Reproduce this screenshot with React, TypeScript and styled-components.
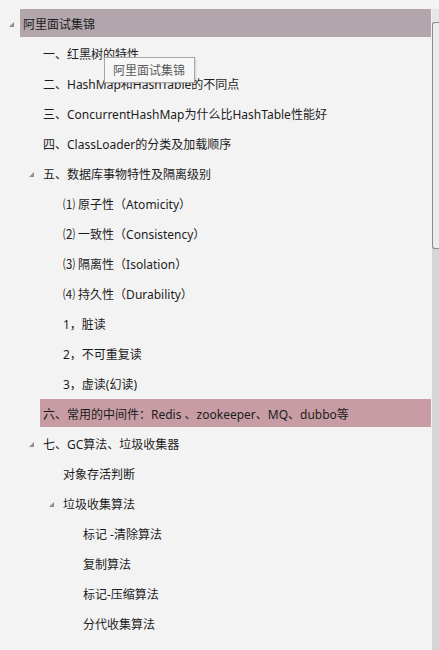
import React from "react";
import styled, { createGlobalStyle } from "styled-components";

const Global = createGlobalStyle`
  html, body { margin: 0; padding: 0; background: #f3f3f3; overflow: hidden; }
  #root { width: 439px; height: 650px; }
`;

const Panel = styled.div`
  position: relative;
  display: flex;
  width: 439px;
  height: 650px;
  background: #f3f3f3;
  font-family: "Noto Sans", "Noto Sans CJK SC", sans-serif;
  font-size: 12px;
  color: #1c1c1c;
  overflow: hidden;
`;

const Tree = styled.div`
  flex: 1;
  display: flex;
  flex-direction: column;
  gap: 2px;
  padding-top: 9px;
  padding-right: 1px;
`;

const Row = styled.div`
  display: flex;
  height: 28px;
  flex: none;
`;

const Gutter = styled.div<{ $level: number }>`
  width: ${(p) => 20 + p.$level * 20}px;
  flex: none;
  display: flex;
  justify-content: flex-end;
  align-items: center;
  padding-right: 6px;
  padding-top: 2px;
  box-sizing: border-box;
`;

const Label = styled.div<{ $bg?: string }>`
  flex: 1;
  display: flex;
  align-items: center;
  padding-left: 3px;
  padding-top: 3px;
  box-sizing: border-box;
  background: ${(p) => p.$bg ?? "transparent"};
  white-space: nowrap;
  line-height: 1;
`;

const Scrollbar = styled.div`
  width: 7px;
  flex: none;
  margin-top: 9px;
  background: #d5d5d5;
  display: flex;
  flex-direction: column;
  position: relative;
`;

const ScrollArrow = styled.div`
  height: 13px;
  background: #e6e6e6;
`;

const Thumb = styled.div`
  height: 227px;
  background: #ececec;
  border-left: 1px solid #8c8c8c;
  border-top: 1px solid #8c8c8c;
  border-bottom: 1px solid #8c8c8c;
  border-radius: 3px 0 0 3px;
  box-sizing: border-box;
`;

const Track = styled.div`
  flex: 1;
`;

const Tooltip = styled.div`
  position: absolute;
  left: 104px;
  top: 57px;
  width: 91px;
  height: 26px;
  box-sizing: border-box;
  border: 1px solid #a6a6a6;
  background: #f7f7f7;
  color: #5a5a5a;
  font-size: 12px;
  display: flex;
  align-items: center;
  padding-left: 8px;
  padding-top: 2px;
  box-shadow: 1px 1px 2px rgba(0, 0, 0, 0.12);
  white-space: nowrap;
  line-height: 1;
`;

const Expander = () => (
  <svg width="5" height="5" viewBox="0 0 5 5">
    <polygon points="5,0 5,5 0,5" fill="#8f8f8f" />
  </svg>
);

type Item = { text: string; level: number; open?: boolean; bg?: string };

const items: Item[] = [
  { text: "阿里面试集锦", level: 0, open: true, bg: "#b2a6ac" },
  { text: "一、红黑树的特性", level: 1 },
  { text: "二、HashMap和HashTable的不同点", level: 1 },
  { text: "三、ConcurrentHashMap为什么比HashTable性能好", level: 1 },
  { text: "四、ClassLoader的分类及加载顺序", level: 1 },
  { text: "五、数据库事物特性及隔离级别", level: 1, open: true },
  { text: "⑴ 原子性（Atomicity）", level: 2 },
  { text: "⑵ 一致性（Consistency）", level: 2 },
  { text: "⑶ 隔离性（Isolation）", level: 2 },
  { text: "⑷ 持久性（Durability）", level: 2 },
  { text: "1，脏读", level: 2 },
  { text: "2，不可重复读", level: 2 },
  { text: "3，虚读(幻读)", level: 2 },
  { text: "六、常用的中间件：Redis 、zookeeper、MQ、dubbo等", level: 1, bg: "#c79ca4" },
  { text: "七、GC算法、垃圾收集器", level: 1, open: true },
  { text: "对象存活判断", level: 2 },
  { text: "垃圾收集算法", level: 2, open: true },
  { text: "标记 -清除算法", level: 3 },
  { text: "复制算法", level: 3 },
  { text: "标记-压缩算法", level: 3 },
  { text: "分代收集算法", level: 3 },
];

export default function App() {
  return (
    <>
      <Global />
      <Panel>
        <Tree>
          {items.map((it, i) => (
            <Row key={i}>
              <Gutter $level={it.level}>{it.open ? <Expander /> : null}</Gutter>
              <Label $bg={it.bg}>{it.text}</Label>
            </Row>
          ))}
        </Tree>
        <Scrollbar>
          <ScrollArrow />
          <Thumb />
          <Track />
        </Scrollbar>
        <Tooltip>阿里面试集锦</Tooltip>
      </Panel>
    </>
  );
}
